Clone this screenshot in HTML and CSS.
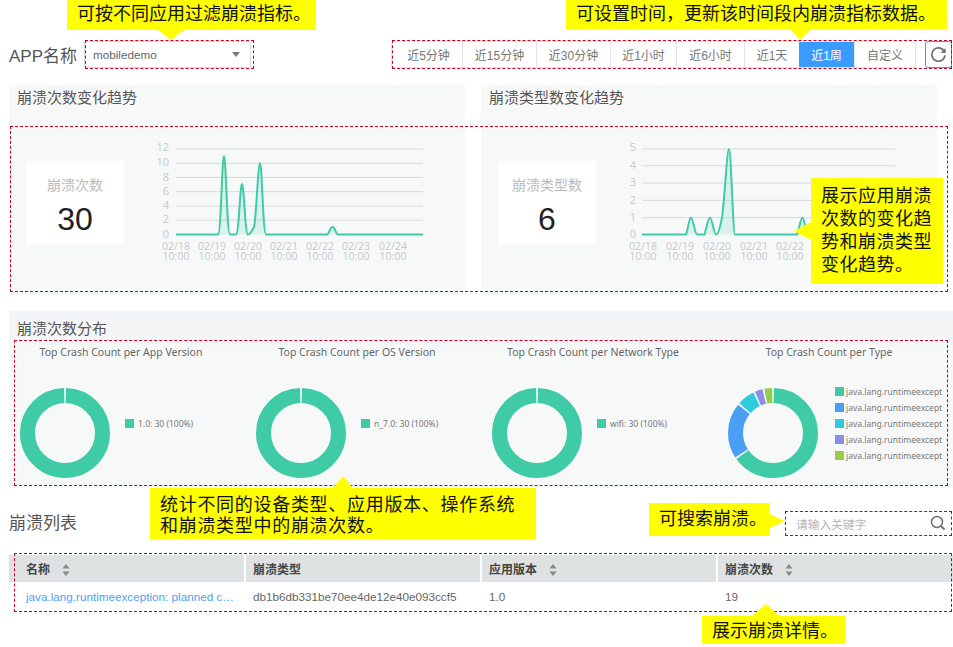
FILE: index.html
```html
<!DOCTYPE html>
<html lang="zh-CN">

<head>
    <meta charset="UTF-8">
    <title>崩溃分析</title>
    <link rel="stylesheet" href="styles.css">
</head>

<body>
    <div class="page">
        <div class="toolbar">
            <div class="app-filter">
                <span class="app-label">APP名称</span>
                <div class="app-select">mobiledemo<i class="caret"></i></div>
            </div>
            <div class="time-filter">
                <div class="time-group">
                    <span>近5分钟</span>
                    <span>近15分钟</span>
                    <span>近30分钟</span>
                    <span>近1小时</span>
                    <span>近6小时</span>
                    <span>近1天</span>
                    <span class="active">近1周</span>
                    <span>自定义</span>
                </div>
                <button class="refresh-btn" aria-label="刷新">
                    <svg width="17" height="17" viewBox="0 0 17 17">
                        <path d="M14.6 6.2A6.6 6.6 0 1 0 15 9.4" fill="none" stroke="#707070" stroke-width="1.7" />
                        <path d="M15.6 1.9V7H10.6Z" fill="#707070" />
                    </svg>
                </button>
            </div>
        </div>

        <div class="trend-row">
            <div class="panel">
                <h3 class="panel-title">崩溃次数变化趋势</h3>
                <div class="panel-body">
                    <div class="stat-card">
                        <div class="stat-label">崩溃次数</div>
                        <div class="stat-value">30</div>
                    </div>
                    <svg class="trend-chart" width="290" height="125" viewBox="144 140 290 125">
                        <g class="grid">
                            <path d="M176 149H423M176 163.300H423M176 177.500H423M176 191.700H423M176 206H423M176 220.200H423" />
                        </g>
                        <g class="axis-y" text-anchor="end">
                            <text x="169" y="151">12</text>
                            <text x="169" y="166">10</text>
                            <text x="169" y="181">8</text>
                            <text x="169" y="195">6</text>
                            <text x="169" y="209">4</text>
                            <text x="169" y="223">2</text>
                            <text x="169" y="238">0</text>
                        </g>
                        <path class="area" d="M218 234.500C221 234.500 222 156 224 156C226 156 227 234.500 230 234.500H236C239 234.500 240 184 242 184C244 184 245 234.500 248 234.500C250 234.500 252 231 254 227C256 222 258 163 260 163C262 163 263 234.500 266 234.500H327C329 234.500 330 227 332.500 227C335 227 336 234.500 338 234.500Z" />
                        <path class="line" d="M176 234.500H218C221 234.500 222 156 224 156C226 156 227 234.500 230 234.500H236C239 234.500 240 184 242 184C244 184 245 234.500 248 234.500C250 234.500 252 231 254 227C256 222 258 163 260 163C262 163 263 234.500 266 234.500H327C329 234.500 330 227 332.500 227C335 227 336 234.500 338 234.500H423" />
                        <g class="axis-x" text-anchor="middle">
                            <text y="249.500"><tspan x="176">02/18</tspan><tspan x="176" dy="10">10:00</tspan></text>
                            <text y="249.500"><tspan x="212">02/19</tspan><tspan x="212" dy="10">10:00</tspan></text>
                            <text y="249.500"><tspan x="248">02/20</tspan><tspan x="248" dy="10">10:00</tspan></text>
                            <text y="249.500"><tspan x="284">02/21</tspan><tspan x="284" dy="10">10:00</tspan></text>
                            <text y="249.500"><tspan x="320">02/22</tspan><tspan x="320" dy="10">10:00</tspan></text>
                            <text y="249.500"><tspan x="356">02/23</tspan><tspan x="356" dy="10">10:00</tspan></text>
                            <text y="249.500"><tspan x="393">02/24</tspan><tspan x="393" dy="10">10:00</tspan></text>
                        </g>
                    </svg>
                </div>
            </div>
            <div class="panel">
                <h3 class="panel-title">崩溃类型数变化趋势</h3>
                <div class="panel-body">
                    <div class="stat-card">
                        <div class="stat-label">崩溃类型数</div>
                        <div class="stat-value">6</div>
                    </div>
                    <svg class="trend-chart" width="290" height="125" viewBox="616 140 290 125">
                        <g class="grid">
                            <path d="M642 149H895M642 165.700H895M642 183H895M642 200.300H895M642 217.700H895" />
                        </g>
                        <g class="axis-y" text-anchor="end">
                            <text x="636" y="151">5</text>
                            <text x="636" y="169">4</text>
                            <text x="636" y="186">3</text>
                            <text x="636" y="204">2</text>
                            <text x="636" y="221">1</text>
                            <text x="636" y="238">0</text>
                        </g>
                        <path class="area" d="M686 234.500C688 230 689 217.700 691 217.700C693 217.700 695 234.500 697 234.500H704.500C706 230 708 217.700 710 217.700C712 217.700 714 234.500 716 234.500C718 234.500 720 228 722 217.700C725 195 727 149 729 149C731 149 733 234.500 735 234.500H797C799 230 800.500 217.700 802.500 217.700C804.500 217.700 806 234.500 808 234.500Z" />
                        <path class="line" d="M642 234.500H686C688 230 689 217.700 691 217.700C693 217.700 695 234.500 697 234.500H704.500C706 230 708 217.700 710 217.700C712 217.700 714 234.500 716 234.500C718 234.500 720 228 722 217.700C725 195 727 149 729 149C731 149 733 234.500 735 234.500H797C799 230 800.500 217.700 802.500 217.700C804.500 217.700 806 234.500 808 234.500H895" />
                        <g class="axis-x" text-anchor="middle">
                            <text y="249.500"><tspan x="643">02/18</tspan><tspan x="643" dy="10">10:00</tspan></text>
                            <text y="249.500"><tspan x="680">02/19</tspan><tspan x="680" dy="10">10:00</tspan></text>
                            <text y="249.500"><tspan x="717">02/20</tspan><tspan x="717" dy="10">10:00</tspan></text>
                            <text y="249.500"><tspan x="754">02/21</tspan><tspan x="754" dy="10">10:00</tspan></text>
                            <text y="249.500"><tspan x="790">02/22</tspan><tspan x="790" dy="10">10:00</tspan></text>
                        </g>
                    </svg>
                </div>
            </div>
        </div>

        <div class="dist-section">
            <h3 class="dist-title">崩溃次数分布</h3>
            <div class="dist-grid">
                <div class="dist-item">
                    <div class="dist-name">Top Crash Count per App Version</div>
                    <div class="dist-chart">
                        <svg class="donut" width="90" height="90" viewBox="0 0 90 90">
                            <circle cx="45" cy="45" r="37.500" pathLength="100" stroke="#3ecba5" stroke-dasharray="99.300 .7" stroke-dashoffset="-.35" />
                        </svg>
                        <ul class="legend">
                            <li><i class="c-green"></i>1.0: 30 (100%)</li>
                        </ul>
                    </div>
                </div>
                <div class="dist-item">
                    <div class="dist-name">Top Crash Count per OS Version</div>
                    <div class="dist-chart">
                        <svg class="donut" width="90" height="90" viewBox="0 0 90 90">
                            <circle cx="45" cy="45" r="37.500" pathLength="100" stroke="#3ecba5" stroke-dasharray="99.300 .7" stroke-dashoffset="-.35" />
                        </svg>
                        <ul class="legend">
                            <li><i class="c-green"></i>n_7.0: 30 (100%)</li>
                        </ul>
                    </div>
                </div>
                <div class="dist-item">
                    <div class="dist-name">Top Crash Count per Network Type</div>
                    <div class="dist-chart">
                        <svg class="donut" width="90" height="90" viewBox="0 0 90 90">
                            <circle cx="45" cy="45" r="37.500" pathLength="100" stroke="#3ecba5" stroke-dasharray="99.300 .7" stroke-dashoffset="-.35" />
                        </svg>
                        <ul class="legend">
                            <li><i class="c-green"></i>wifi: 30 (100%)</li>
                        </ul>
                    </div>
                </div>
                <div class="dist-item">
                    <div class="dist-name">Top Crash Count per Type</div>
                    <div class="dist-chart">
                        <svg class="donut" width="90" height="90" viewBox="0 0 90 90">
                            <circle cx="45" cy="45" r="37.500" pathLength="29" stroke="#3ecba5" stroke-dasharray="18.800 10.200" stroke-dashoffset="-.1" />
                            <circle cx="45" cy="45" r="37.500" pathLength="29" stroke="#4a9ff5" stroke-dasharray="5.800 23.200" stroke-dashoffset="-19.100" />
                            <circle cx="45" cy="45" r="37.500" pathLength="29" stroke="#2fcbdc" stroke-dasharray="1.800 27.200" stroke-dashoffset="-25.100" />
                            <circle cx="45" cy="45" r="37.500" pathLength="29" stroke="#8b8be8" stroke-dasharray=".8 28.200" stroke-dashoffset="-27.100" />
                            <circle cx="45" cy="45" r="37.500" pathLength="29" stroke="#95cc4a" stroke-dasharray=".8 28.200" stroke-dashoffset="-28.100" />
                        </svg>
                        <ul class="legend legend-wide">
                            <li><i class="c-green"></i>java.lang.runtimeexcept</li>
                            <li><i class="c-blue"></i>java.lang.runtimeexcept</li>
                            <li><i class="c-cyan"></i>java.lang.runtimeexcept</li>
                            <li><i class="c-purple"></i>java.lang.runtimeexcept</li>
                            <li><i class="c-lime"></i>java.lang.runtimeexcept</li>
                        </ul>
                    </div>
                </div>
            </div>
        </div>

        <div class="list-header">
            <h3 class="list-title">崩溃列表</h3>
            <div class="search-box">
                <span class="search-hint">请输入关键字</span>
                <svg width="16" height="16" viewBox="0 0 16 16">
                    <circle cx="7" cy="7" r="5.500" fill="none" stroke="#707070" stroke-width="1.500" />
                    <path d="M11 11L14.500 14.500" stroke="#707070" stroke-width="1.800" />
                </svg>
            </div>
        </div>

        <table class="crash-table">
            <thead>
                <tr>
                    <th>名称<svg class="sort" width="8" height="12" viewBox="0 0 8 12"><path d="M4 0L7.500 4.500H.5ZM4 12L.5 7.500H7.500Z" /></svg></th>
                    <th>崩溃类型</th>
                    <th>应用版本<svg class="sort" width="8" height="12" viewBox="0 0 8 12"><path d="M4 0L7.500 4.500H.5ZM4 12L.5 7.500H7.500Z" /></svg></th>
                    <th>崩溃次数<svg class="sort" width="8" height="12" viewBox="0 0 8 12"><path d="M4 0L7.500 4.500H.5ZM4 12L.5 7.500H7.500Z" /></svg></th>
                </tr>
            </thead>
            <tbody>
                <tr>
                    <td><a href="#">java.lang.runtimeexception: planned c…</a></td>
                    <td>db1b6db331be70ee4de12e40e093ccf5</td>
                    <td>1.0</td>
                    <td>19</td>
                </tr>
            </tbody>
        </table>

        <!-- annotation layer -->
        <div class="mark mark-select"></div>
        <div class="mark mark-time"></div>
        <div class="mark mark-trend"></div>
        <div class="mark mark-dist"></div>
        <div class="mark mark-search"></div>
        <div class="mark mark-table"></div>

        <div class="note note-app">可按不同应用过滤崩溃指标。</div>
        <div class="note note-time">可设置时间，更新该时间段内崩溃指标数据。</div>
        <div class="note note-trend">展示应用崩溃<br>次数的变化趋<br>势和崩溃类型<br>变化趋势。</div>
        <div class="note note-dist">统计不同的设备类型、应用版本、操作系统<br>和崩溃类型中的崩溃次数。</div>
        <div class="note note-search">可搜索崩溃。</div>
        <div class="note note-detail">展示崩溃详情。</div>
    </div>
</body>

</html>
```

FILE: styles.css
```css
* {
    box-sizing: border-box;
}

body {
    margin: 0;
    background: #fff;
    color: #555;
    font-family: "Liberation Sans", "Noto Sans CJK SC", sans-serif;
    font-size: 12px;
}

h3 {
    margin: 0;
    font-weight: normal;
}

.page {
    position: relative;
    width: 953px;
    height: 647px;
    overflow: hidden;
}

/* toolbar */
.toolbar {
    display: flex;
    justify-content: space-between;
    align-items: center;
    height: 27px;
    margin: 41px 1px 0 9px;
}

.app-filter,
.time-filter {
    display: flex;
    align-items: center;
}

.app-label {
    width: 75px;
    font-size: 17px;
}

.app-select {
    display: flex;
    justify-content: space-between;
    align-items: center;
    width: 167px;
    height: 27px;
    padding: 0 9px 0 8px;
    background: #fff;
    border: 1px solid #d8dadc;
    border-radius: 2px;
    color: #666;
    font-size: 11.700px;
}

.caret {
    width: 0;
    height: 0;
    margin-right: 1px;
    border-left: 4px solid transparent;
    border-right: 4px solid transparent;
    border-top: 5px solid #777;
}

.time-group {
    display: grid;
    grid-template-columns: 70px 74px 74px 66px 68px 55px 55px 61px;
    height: 27px;
    border: 1px solid #e2e4e5;
    border-radius: 2px;
}

.time-group span {
    display: flex;
    justify-content: center;
    align-items: center;
    border-left: 1px solid #e2e4e5;
    color: #777;
}

.time-group span:first-child {
    padding-left: 3px;
    border-left: 0;
}

.time-group .active {
    background: #3a9bff;
    border-left: 0;
    color: #fff;
}

.refresh-btn {
    display: flex;
    justify-content: center;
    align-items: center;
    width: 27px;
    height: 27px;
    margin-left: 9px;
    padding: 0;
    background: #fff;
    border: 1px solid #3a9bff;
    border-radius: 3px;
}

/* trend panels */
.trend-row {
    display: grid;
    grid-template-columns: 456px 456px;
    gap: 16px;
    margin: 17px 0 0 9px;
}

.panel {
    height: 210px;
    background: #f7f9f9;
}

.panel-title {
    height: 41px;
    padding: 1px 8px 0;
    font-size: 15px;
    line-height: 23px;
}

.panel-body {
    display: flex;
    align-items: center;
    gap: 20px;
    padding: 14px 0 0 17px;
}

.stat-card {
    flex: none;
    width: 98px;
    height: 84px;
    padding-top: 14px;
    background: #fff;
    text-align: center;
}

.stat-label {
    color: #bbb;
    font-size: 14px;
    line-height: 20px;
}

.stat-value {
    margin-top: 7px;
    color: #222;
    font-size: 32px;
    line-height: 34px;
}

.trend-chart {
    flex: none;
}

.grid path {
    fill: none;
    stroke: #d6d9da;
    stroke-width: 1;
}

.axis-y text,
.axis-x text {
    fill: #c6c8ca;
    font-family: "Open Sans", sans-serif;
    font-size: 11px;
}

.axis-x text {
    font-size: 10.500px;
}

.line {
    fill: none;
    stroke: #3ecba5;
    stroke-width: 2;
}

.area {
    fill: #3ecba5;
    fill-opacity: .16;
}

/* distribution */
.dist-section {
    height: 177px;
    margin: 16px 0 0 9px;
    background: #f7f9f9;
}

.dist-title {
    height: 34px;
    padding-left: 8px;
    background: #f4f5f7;
    font-size: 15px;
    line-height: 36px;
}

.dist-grid {
    display: grid;
    grid-template-columns: repeat(4, 236px);
    margin-left: -6px;
}

.dist-name {
    color: #666;
    font-family: "Noto Sans", sans-serif;
    font-size: 10.500px;
    line-height: 14px;
    text-align: center;
}

.dist-chart {
    display: flex;
    align-items: flex-start;
    margin-top: 29px;
    padding-left: 17px;
}

.donut {
    flex: none;
    transform: rotate(-90deg);
}

.donut circle {
    fill: none;
    stroke-width: 15;
}

.legend {
    margin: 27px 0 0 15px;
    padding: 0;
    list-style: none;
    color: #777;
    font-family: "Noto Sans", sans-serif;
    font-size: 8.500px;
}

.legend-wide {
    margin: -5px 0 0 17px;
}

.legend li {
    display: flex;
    align-items: center;
    height: 16px;
    white-space: nowrap;
}

.legend i {
    width: 9px;
    height: 9px;
    margin-right: 4px;
}

.legend-wide i {
    margin-right: 2px;
}

.c-green { background: #3ecba5; }
.c-blue { background: #4a9ff5; }
.c-cyan { background: #2fcbdc; }
.c-purple { background: #8b8be8; }
.c-lime { background: #95cc4a; }

/* crash list */
.list-header {
    display: flex;
    justify-content: space-between;
    align-items: center;
    height: 24px;
    margin: 23px 1px 0 9px;
}

.list-title {
    padding-bottom: 3px;
    font-size: 17px;
}

.search-box {
    display: flex;
    justify-content: space-between;
    align-items: center;
    width: 166px;
    height: 24px;
    padding: 0 6px 0 10px;
    background: #fff;
}

.search-hint {
    color: #b4b6b8;
    font-size: 11.700px;
}

.crash-table {
    width: 944px;
    margin: 20px 0 0 9px;
    border-collapse: collapse;
    table-layout: fixed;
}

.crash-table th {
    height: 27px;
    padding: 0 0 0 7px;
    background: #dfe2e3;
    border-left: 2px solid #fff;
    color: #444;
    font-size: 12px;
    text-align: left;
}

.crash-table th:first-child,
.crash-table td:first-child {
    padding-left: 17px;
    border-left: 0;
}

.crash-table td {
    height: 29px;
    padding: 0 0 0 8px;
    color: #666;
    font-size: 11.700px;
}

.crash-table a {
    color: #4d9ff8;
    text-decoration: none;
}

.sort {
    margin-left: 12px;
    fill: #888;
    vertical-align: -2px;
}

/* annotation layer */
.mark {
    position: absolute;
    border: 1px dashed #c8001e;
}

.mark-select { left: 85px; top: 40px; width: 169px; height: 29px; }
.mark-time { left: 392px; top: 40px; width: 560px; height: 29px; }
.mark-trend { left: 10px; top: 126px; width: 938px; height: 166px; }
.mark-dist { left: 14px; top: 340px; width: 934px; height: 146px; }
.mark-search { left: 785px; top: 511px; width: 167px; height: 25px; }
.mark-table { left: 14px; top: 553px; width: 938px; height: 59px; }

.note {
    position: absolute;
    background: #ff0;
    color: #111;
    font-size: 18px;
    white-space: nowrap;
}

.note::after {
    content: "";
    position: absolute;
    width: 0;
    height: 0;
}

.note-app {
    left: 67px;
    top: 0;
    width: 249px;
    height: 30px;
    padding-left: 10px;
    line-height: 28px;
}

.note-app::after {
    left: 91px;
    top: 30px;
    border-left: 13px solid transparent;
    border-right: 13px solid transparent;
    border-top: 10px solid #ff0;
}

.note-time {
    left: 566px;
    top: 0;
    width: 381px;
    height: 29px;
    padding-left: 10px;
    line-height: 28px;
}

.note-time::after {
    left: 224px;
    top: 29px;
    border-left: 10px solid transparent;
    border-right: 11px solid transparent;
    border-top: 11px solid #ff0;
}

.note-trend {
    left: 811px;
    top: 178px;
    width: 132px;
    height: 106px;
    padding: 7px 0 0 10px;
    letter-spacing: .5px;
    line-height: 23px;
}

.note-trend::after {
    left: -17px;
    top: 44px;
    border-top: 9px solid transparent;
    border-bottom: 9px solid transparent;
    border-right: 17px solid #ff0;
}

.note-dist {
    left: 150px;
    top: 488px;
    width: 386px;
    height: 51px;
    padding: 7px 0 0 10px;
    letter-spacing: .7px;
    line-height: 21px;
}

.note-dist::after {
    left: 183px;
    top: -12px;
    border-left: 10px solid transparent;
    border-right: 10px solid transparent;
    border-bottom: 12px solid #ff0;
}

.note-search {
    left: 649px;
    top: 503px;
    width: 121px;
    height: 33px;
    padding-left: 10px;
    line-height: 33px;
}

.note-search::after {
    left: 121px;
    top: 11px;
    border-top: 7px solid transparent;
    border-bottom: 7px solid transparent;
    border-left: 15px solid #ff0;
}

.note-detail {
    left: 702px;
    top: 616px;
    width: 143px;
    height: 28px;
    padding-left: 10px;
    line-height: 30px;
}

.note-detail::after {
    left: 50px;
    top: -12px;
    border-left: 14px solid transparent;
    border-right: 14px solid transparent;
    border-bottom: 12px solid #ff0;
}
```
